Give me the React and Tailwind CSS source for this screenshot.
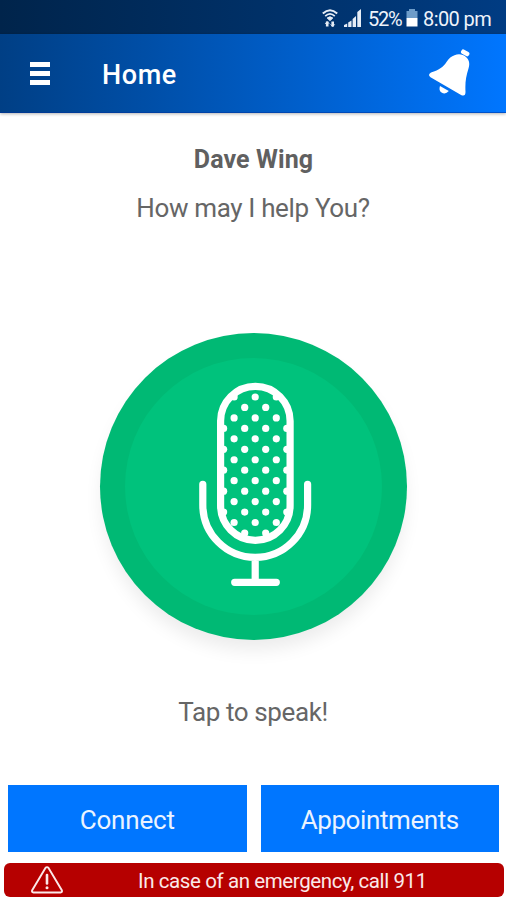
import React from "react";

const dots = [];
for (let row = 0; row < 14; row++) {
  let xs = row % 2 === 0 ? [234.1, 255.2, 276.3] : [223.6, 244.7, 265.7, 286.8];
  // rounded ends leave no room for the outer dots
  if (row === 1 || row === 13) xs = [244.7, 265.7];
  xs.forEach((x) => dots.push({ x, y: 397 + row * 10.46 }));
}

const WifiIcon = () => (
  <svg width="16" height="19" viewBox="0 0 16 19" fill="none" stroke="#e6edf6">
    <path d="M.8 4.600Q8-2 15.200 4.600" strokeWidth="2" />
    <path d="M3.200 7.200Q8 2.600 12.800 7.200" strokeWidth="1.700" />
    <path d="M5.200 9Q8 6.600 10.800 9L8 11.600Z" fill="#e6edf6" strokeWidth="1" />
    <path d="M5.200 17.600v-5M10.700 12.400v5" strokeWidth="2.600" />
    <path d="M3.200 14.800l2-2.200 2 2.200M8.700 15.400l2 2.200 2-2.200" strokeWidth="1" />
  </svg>
);

const SignalIcon = () => (
  <svg width="18" height="18" viewBox="0 0 18 18" fill="#e6edf6">
    <path d="M0 18v-2l3.200-1.500V18zM4.200 18v-4.500l3.300-2V18zM8.600 18v-8l3.400-3v11zM13.300 18V3L17 0v18z" />
  </svg>
);

const BatteryIcon = () => (
  <svg width="12" height="18" viewBox="0 0 12 18">
    <path d="M3 0h6v2h2.500v7H.5V2H3z" fill="#6d9cc9" />
    <path d="M.5 9h11v8.500H.5z" fill="#fff" />
  </svg>
);

const BellIcon = () => (
  <svg width="44" height="48" viewBox="428 49 44 48" fill="#fff">
    <rect x="460.800" y="50.600" width="8.800" height="4.600" rx="2" transform="rotate(30 465.200 52.900)" />
    <path d="M454.500 55.300C458.500 53.500 463 54.300 466 56.900C469.300 59.800 470 63.500 468.500 68.500C466 76.500 465 82 465.500 92Q465.500 96.700 461.500 95.200L430.500 77.200Q427.300 74.700 431 72.600C439.500 70 443.500 66.800 446.500 62C449 58 451.500 56.500 454.500 55.300Z" />
    <path d="M440 86Q438.500 90.500 441.500 92.500Q445.500 95 448.800 91Z" />
  </svg>
);

const MicButton = () => (
  <button className="block w-[307px] h-[307px] rounded-full bg-[#00b974] p-[25px] shadow-[0_12px_18px_-2px_rgba(0,0,0,0.08)]">
    <div className="w-[257px] h-[257px] rounded-full bg-[#00c27c]">
      <svg width="257" height="257" viewBox="125 358 257 257" fill="none">
        <g fill="#fff">
          {dots.map((d, i) => (
            <circle key={i} cx={d.x} cy={d.y} r="3.6" />
          ))}
        </g>
        <g stroke="#fff" strokeWidth="7.200" strokeLinecap="round">
          <rect x="220.600" y="386.300" width="69.500" height="154" rx="34.750" />
          <path d="M202.800 484.300V505a52.400 52.400 0 0 0 104.800 0V484.300M255.200 557.500V582.300M234.700 582.300H276.300" />
        </g>
      </svg>
    </div>
  </button>
);

const WarningIcon = () => (
  <svg width="34" height="30" viewBox="0 0 34 30" fill="none" stroke="#fbe9e9">
    <path d="M15.300 3.200L2.200 25.200Q1.300 27.300 3.500 27.500H30.500Q32.700 27.300 31.800 25.200L18.700 3.200Q17 1 15.300 3.200Z" strokeWidth="1.900" />
    <path d="M17 10V18.500" strokeWidth="2.600" strokeLinecap="round" />
    <circle cx="17" cy="22.700" r="1.500" fill="#fbe9e9" stroke="none" />
  </svg>
);

const App = () => {
  return (
    <div className="w-[506px] h-[900px] bg-white font-[Roboto,sans-serif] flex flex-col overflow-hidden">
      {/* STATUS BAR */}
      <div className="h-[34px] shrink-0 bg-linear-to-r from-[#00244b] to-[#003c83] flex items-center pl-[322px] pt-[2px] text-[#eef3fa] text-[20px] leading-none whitespace-nowrap">
        <WifiIcon />
        <div className="ml-[6px]">
          <SignalIcon />
        </div>
        <span className="ml-[6px] w-[35px] pt-px tracking-[-1.2px]">52%</span>
        <div className="ml-[3px]">
          <BatteryIcon />
        </div>
        <span className="ml-[5px] pt-px tracking-[-0.6px]">8:00 pm</span>
      </div>

      {/* HEADER */}
      <header className="h-[79px] shrink-0 bg-linear-to-r from-[#003f85] to-[#0076ff] flex items-center pl-[30px] pr-[34px] border-b border-[#00309a]/50 shadow-[0_1px_3px_rgba(0,0,0,0.3)]">
        <button className="flex flex-col gap-[4px] pt-px">
          <span className="block w-5 h-[5px] bg-white" />
          <span className="block w-5 h-[5px] bg-white" />
          <span className="block w-5 h-[5px] bg-white" />
        </button>
        <h1 className="ml-[52px] text-white font-medium text-[27px] leading-8 pt-[4px] tracking-[0.6px]">Home</h1>
        <button className="ml-auto">
          <BellIcon />
        </button>
      </header>

      {/* CONTENT */}
      <main className="flex-1 flex flex-col items-center text-[#666]">
        <h2 className="mt-[31px] pl-px text-[25px] leading-8 font-bold text-[#606060] tracking-[0.1px]">Dave Wing</h2>
        <p className="mt-4 text-[26px] leading-8 tracking-[-0.35px]">How may I help You?</p>
        <div className="mt-[109px]">
          <MicButton />
        </div>
        <p className="mt-[56px] text-[26px] leading-8 tracking-[-0.4px]">Tap to speak!</p>
      </main>

      {/* ACTIONS */}
      <div className="shrink-0 grid grid-cols-2 gap-[14px] pl-[8px] pr-[7px] text-[26px] text-[#eaf3ff]">
        <button className="h-[67px] pt-[3px] bg-[#0076ff] tracking-[-0.2px]">Connect</button>
        <button className="h-[67px] pt-[3px] bg-[#0076ff] tracking-[-0.4px]">Appointments</button>
      </div>

      {/* EMERGENCY */}
      <div className="shrink-0 mt-[11px] mb-[3px] ml-[4px] mr-[2px] h-[34px] rounded-[6px] bg-[#b60000] flex items-center pl-[26px] text-[#fbe9e9]">
        <WarningIcon />
        <span className="ml-[74px] pt-[2px] text-[20.500px] leading-none tracking-[-0.4px] whitespace-nowrap">
          In case of an emergency, call 911
        </span>
      </div>
    </div>
  );
};

export default App;
